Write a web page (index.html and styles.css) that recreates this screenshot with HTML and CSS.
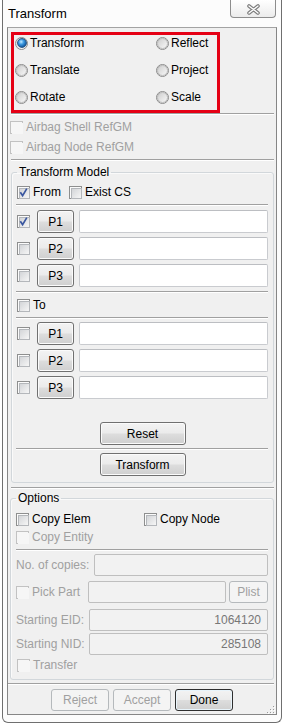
FILE: index.html
```html
<!DOCTYPE html>
<html>
<head>
<meta charset="utf-8">
<title>Transform</title>
<link rel="stylesheet" href="styles.css">
</head>
<body>
<div class="window">
  <div class="titlebar">
    <span class="title">Transform</span>
    <span class="close">
      <svg width="13" height="11" viewBox="0 0 13 11">
        <path d="M2 2 L11 9 M11 2 L2 9" stroke="#7d7d7d" stroke-width="3.6" stroke-linecap="round" fill="none"/>
        <path d="M2 2 L11 9 M11 2 L2 9" stroke="#ffffff" stroke-width="1.3" stroke-linecap="round" fill="none"/>
      </svg>
    </span>
  </div>
  <div class="panel">
    <div class="mode-box">
      <div class="opt"><span class="radio on"></span>Transform</div>
      <div class="opt"><span class="radio"></span>Reflect</div>
      <div class="opt"><span class="radio"></span>Translate</div>
      <div class="opt"><span class="radio"></span>Project</div>
      <div class="opt"><span class="radio"></span>Rotate</div>
      <div class="opt"><span class="radio"></span>Scale</div>
    </div>
    <div class="sep wide"></div>
    <div class="airbag">
      <div class="chk dis"><span class="cb"></span>Airbag Shell RefGM</div>
      <div class="chk dis"><span class="cb"></span>Airbag Node RefGM</div>
    </div>
    <div class="sep wide gap2"></div>

    <fieldset class="group model">
      <legend>Transform Model</legend>
      <div class="line from-line">
        <div class="chk w52"><span class="cb checked"><svg width="13" height="13" viewBox="0 0 13 13"><path d="M3.3 6.2 L5.6 9.6 L9.8 2.6" stroke="#3a57a0" stroke-width="1.7" fill="none"/></svg></span>From</div>
        <div class="chk"><span class="cb"></span>Exist CS</div>
      </div>
      <div class="sep in"></div>
      <div class="prows">
        <div class="prow"><span class="cb checked"><svg width="13" height="13" viewBox="0 0 13 13"><path d="M3.3 6.2 L5.6 9.6 L9.8 2.6" stroke="#3a57a0" stroke-width="1.7" fill="none"/></svg></span><span class="btn pbtn">P1</span><span class="field"></span></div>
        <div class="prow"><span class="cb"></span><span class="btn pbtn">P2</span><span class="field"></span></div>
        <div class="prow"><span class="cb"></span><span class="btn pbtn">P3</span><span class="field"></span></div>
      </div>
      <div class="sep in"></div>
      <div class="line to-line">
        <div class="chk"><span class="cb"></span>To</div>
      </div>
      <div class="sep in"></div>
      <div class="prows second">
        <div class="prow"><span class="cb"></span><span class="btn pbtn">P1</span><span class="field"></span></div>
        <div class="prow"><span class="cb"></span><span class="btn pbtn">P2</span><span class="field"></span></div>
        <div class="prow"><span class="cb"></span><span class="btn pbtn">P3</span><span class="field"></span></div>
      </div>
      <span class="btn action reset">Reset</span>
      <div class="sep in tight"></div>
      <span class="btn action apply">Transform</span>
    </fieldset>

    <div class="sep wide gap4"></div>

    <fieldset class="group options">
      <legend>Options</legend>
      <div class="line copy-line">
        <div class="chk w128"><span class="cb"></span>Copy Elem</div>
        <div class="chk"><span class="cb"></span>Copy Node</div>
      </div>
      <div class="line entity-line">
        <div class="chk dis"><span class="cb"></span>Copy Entity</div>
      </div>
      <div class="sep opts"></div>
      <div class="frow copies">
        <span class="lbl dis w78">No. of copies:</span>
        <span class="field dis"></span>
      </div>
      <div class="frow pick">
        <div class="chk dis w72"><span class="cb"></span>Pick Part</div>
        <span class="field dis"></span>
        <span class="btn off plist">Plist</span>
      </div>
      <div class="frow eid">
        <span class="lbl dis w73">Starting EID:</span>
        <span class="field dis num">1064120</span>
      </div>
      <div class="frow nid">
        <span class="lbl dis w73">Starting NID:</span>
        <span class="field dis num">285108</span>
      </div>
      <div class="line transfer">
        <div class="chk dis"><span class="cb"></span>Transfer</div>
      </div>
    </fieldset>

    <div class="sep foot"></div>
    <div class="footer">
      <span class="btn off fbtn">Reject</span>
      <span class="btn off fbtn">Accept</span>
      <span class="btn def fbtn">Done</span>
    </div>

    <svg class="grip" width="9" height="9" viewBox="0 0 9 9">
      <rect x="7" y="1" width="1" height="1" fill="#9a9a9a"/>
      <rect x="4" y="4" width="1" height="1" fill="#9a9a9a"/>
      <rect x="7" y="4" width="1" height="1" fill="#9a9a9a"/>
      <rect x="1" y="7" width="1" height="1" fill="#9a9a9a"/>
      <rect x="4" y="7" width="1" height="1" fill="#9a9a9a"/>
      <rect x="7" y="7" width="1" height="1" fill="#9a9a9a"/>
      <rect x="8" y="2" width="1" height="1" fill="#ffffff"/>
      <rect x="5" y="5" width="1" height="1" fill="#ffffff"/>
      <rect x="8" y="5" width="1" height="1" fill="#ffffff"/>
      <rect x="2" y="8" width="1" height="1" fill="#ffffff"/>
      <rect x="5" y="8" width="1" height="1" fill="#ffffff"/>
      <rect x="8" y="8" width="1" height="1" fill="#ffffff"/>
    </svg>
  </div>
</div>
</body>
</html>
```

FILE: styles.css
```css
* { box-sizing: border-box; }
html, body { margin: 0; padding: 0; background: #fff; }
body {
  font-family: "Liberation Sans", Arial, sans-serif;
  font-size: 12px;
  color: #000;
  width: 283px;
  height: 723px;
  overflow: hidden;
}

.window {
  margin-left: 2px;
  width: 280px;
  height: 723px;
  border: 1px solid #6f6f6f;
  border-top: none;
  border-radius: 0 0 6px 6px;
  background: #fcfcfc;
}

.titlebar {
  height: 27px;
  display: flex;
  justify-content: space-between;
  align-items: flex-start;
  padding: 0 5px 0 5px;
}
.title { font-size: 13px; line-height: 16px; margin-top: 6px; }
.close {
  width: 46px;
  height: 18px;
  border: 1px solid #8d8d8d;
  border-top: none;
  border-radius: 0 0 4px 4px;
  background: linear-gradient(#ffffff, #ececec);
  display: flex;
  align-items: center;
  justify-content: center;
  padding-top: 1px;
}

.panel {
  margin-left: 4px;
  width: 270px;
  height: 688px;
  border: 1px solid #868686;
  border-top-color: #a3a3a3;
  background: #f0f0f0;
  position: relative;
  display: flow-root;
}

/* radio group */
.mode-box {
  margin: 4px 0 0 3px;
  width: 209px;
  height: 81px;
  border: 3px solid #e50015;
  display: grid;
  grid-template-columns: 141px 1fr;
  grid-auto-rows: 16px;
  row-gap: 11px;
  align-content: start;
}
.opt { display: flex; align-items: center; gap: 2px; line-height: 16px; }
.radio {
  width: 13px;
  height: 13px;
  margin-left: 1px;
  flex-shrink: 0;
  border-radius: 50%;
  border: 1px solid #8c8c8c;
  background: linear-gradient(135deg, #dcdcdc, #ffffff);
  display: flex;
  align-items: center;
  justify-content: center;
}
.radio::before {
  content: "";
  width: 9px;
  height: 9px;
  border-radius: 50%;
  border: 1px solid #b9b9b9;
  background: linear-gradient(135deg, #cfcfcf, #f7f7f7);
}
.radio.on::before {
  width: 8px;
  height: 8px;
  border: 1px solid #2f5b86;
  background: radial-gradient(circle at 40% 35%, #c4eaff 0, #3d9be2 35%, #0e4f95 80%, #0a3a6e 100%);
}

/* separators */
.sep { height: 2px; border-top: 1px solid #a0a0a0; border-bottom: 1px solid #ffffff; }
.sep.wide { margin: 0 2px 0 3px; }
.sep.gap2 { margin-top: 2px; }
.sep.gap4 { margin-top: 4px; }
.sep.in { margin: 4px 0 0 -1px; }
.sep.in.tight { margin-top: 3px; }
.sep.opts { margin: 4px 0 0 0; }
.sep.foot { margin: 3px 2px 0 0; }

/* checkboxes */
.chk { display: flex; align-items: center; gap: 3px; line-height: 16px; white-space: nowrap; }
.chk.dis, .lbl.dis { color: #a0a0a0; }
.cb {
  width: 13px;
  height: 13px;
  flex-shrink: 0;
  border: 1px solid #8e8f8f;
  background: #fbfbfb;
  padding: 1px;
  position: relative;
}
.cb::before {
  content: "";
  display: block;
  width: 9px;
  height: 9px;
  border: 1px solid #b4b7bb;
  background: linear-gradient(135deg, #d3d5d8, #f6f6f6);
}
.cb svg { position: absolute; left: -1px; top: -1px; }
.chk.dis .cb { border-color: #c2c2c2; background: #f6f6f6; }
.chk.dis .cb::before { border-color: #f6f6f6; background: #f6f6f6; }

.airbag { margin-top: 2px; }
.airbag .chk { height: 20px; padding-left: 2px; }

/* group boxes */
fieldset.group {
  border: 1px solid #d2d7db;
  border-radius: 3px;
  padding: 0 5px 6px 5px;
  min-width: 0;
  box-shadow: inset 1px 1px 0 #fafafa;
}
fieldset.group legend { padding: 0 2px; line-height: 14px; font-size: 12px; }
.model { margin: 4px 2px 0 3px; }
.options { margin: 2px 2px 0 2px; }
.options legend { padding: 0 1px; }

.line { display: flex; height: 16px; }
.from-line { margin-top: 5px; }
.to-line, .transfer { margin-top: 4px; }
.transfer { margin-top: 2px; padding-left: 1px; }
.w52 { width: 52px; }
.w128 { width: 128px; }
.w72 { width: 72px; }
.w78 { width: 78px; flex-shrink: 0; }
.w73 { width: 73px; flex-shrink: 0; }

.prows { margin-top: 4px; display: flex; flex-direction: column; gap: 4px; }
.prows.second { margin-top: 3px; }
.prow { display: flex; align-items: center; height: 23px; }
.prow .cb { margin-right: 7px; }

/* buttons */
.btn {
  display: flex;
  align-items: center;
  justify-content: center;
  border: 1px solid #707070;
  border-radius: 3px;
  background: linear-gradient(#f3f3f3 0%, #ebebeb 48%, #dddddd 52%, #cfcfcf 100%);
  box-shadow: inset 0 0 0 1px #fbfbfb;
  font-size: 12px;
  line-height: 14px;
  color: #000;
  flex-shrink: 0;
}
.pbtn { width: 37px; height: 23px; margin-right: 5px; }
.action { width: 86px; height: 23px; margin: 0 auto; }
.reset { margin-top: 23px; }
.apply { margin-top: 3px; }
.btn.off {
  border-color: #b5b9bc;
  background: #f4f4f4;
  box-shadow: none;
  color: #a0a0a0;
}
.btn.def { border-color: #2e2e2e; box-shadow: inset 0 0 0 1px #e8f4fb; }

/* fields */
.field {
  flex: 1;
  height: 23px;
  background: #ffffff;
  border: 1px solid #c9cbcf;
  border-top-color: #bcbec2;
  border-radius: 2px;
}
.field.dis {
  height: 22px;
  background: #f2f2f2;
  border-color: #bfbfbf;
  color: #777;
  line-height: 20px;
}
.field.num { text-align: right; padding-right: 6px; }

.frow { display: flex; align-items: center; height: 22px; }
.frow .lbl { line-height: 16px; padding-left: 0; }
.copies { margin-top: 3px; }
.pick { margin-top: 5px; }
.pick .plist { width: 39px; height: 22px; margin-left: 3px; }
.eid { margin-top: 6px; }
.nid { margin-top: 2px; }
.copy-line { margin-top: 6px; }
.entity-line { margin-top: 2px; }

/* footer */
.footer { margin-top: 4px; display: flex; justify-content: center; gap: 4px; }
.fbtn { width: 58px; height: 22px; }

.grip { position: absolute; right: 1px; bottom: 0; }
```
